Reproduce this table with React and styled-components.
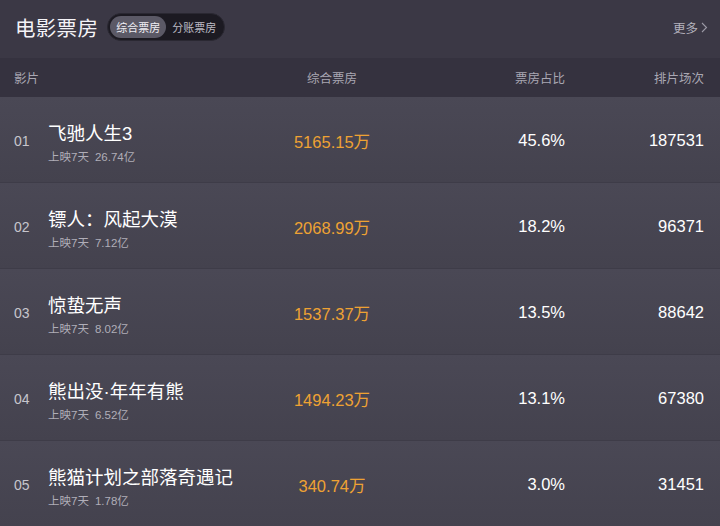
import React, { useState } from "react";
import styled, { createGlobalStyle } from "styled-components";

const GlobalStyle = createGlobalStyle`
  html, body {
    margin: 0;
    padding: 0;
    background: #3b3845;
    font-family: "Liberation Sans", "Noto Sans CJK SC", sans-serif;
    color: #ffffff;
  }
`;

const movies = [
  { rank: "01", name: "飞驰人生3", days: "上映7天", total: "26.74亿", box: "5165.15万", ratio: "45.6%", shows: "187531" },
  { rank: "02", name: "镖人：风起大漠", days: "上映7天", total: "7.12亿", box: "2068.99万", ratio: "18.2%", shows: "96371" },
  { rank: "03", name: "惊蛰无声", days: "上映7天", total: "8.02亿", box: "1537.37万", ratio: "13.5%", shows: "88642" },
  { rank: "04", name: "熊出没·年年有熊", days: "上映7天", total: "6.52亿", box: "1494.23万", ratio: "13.1%", shows: "67380" },
  { rank: "05", name: "熊猫计划之部落奇遇记", days: "上映7天", total: "1.78亿", box: "340.74万", ratio: "3.0%", shows: "31451" },
];

const Page = styled.div`
  width: 720px;
  height: 526px;
  overflow: hidden;
  background: #3b3845;
`;

const TopBar = styled.div`
  height: 58px;
  display: flex;
  align-items: center;
  padding: 0 12px 4px 15px;
  box-sizing: border-box;
`;

const Title = styled.h1`
  margin: 0;
  font-size: 20.5px;
  font-weight: 400;
  color: #f4f3f7;
  letter-spacing: 0.3px;
`;

const Switch = styled.div`
  display: flex;
  margin-left: 9px;
  padding: 2px;
  background: #1c1a22;
  border-radius: 14px;
  border: 1px solid #2a2832;
`;

const SwitchItem = styled.button`
  border: none;
  font-family: inherit;
  font-size: 11px;
  padding: 0 6px;
  height: 22px;
  border-radius: 11px;
  background: ${(p) => (p.$active ? "#5b5966" : "transparent")};
  color: ${(p) => (p.$active ? "#f0eff4" : "#bcbac4")};
  cursor: pointer;
`;

const More = styled.a`
  margin-left: auto;
  display: flex;
  align-items: center;
  gap: 3px;
  font-size: 12.5px;
  color: #b4b2bd;
  text-decoration: none;
`;

const Grid = styled.div`
  display: grid;
  grid-template-columns: 34px 1fr 140px 163px 139px;
  padding: 0 16px 0 14px;
  align-items: center;
`;

const HeadRow = styled(Grid)`
  height: 39px;
  background: #35323f;
  font-size: 12.5px;
  color: #a9a7b2;
`;

const Row = styled(Grid)`
  height: 86px;
  box-sizing: border-box;
  background: linear-gradient(#4a4855, #44424e);
  border-bottom: 1px solid #3e3c48;
`;

const Cell = styled.div`
  text-align: ${(p) => p.$align || "left"};
  grid-column: ${(p) => p.$span || "auto"};
`;

const Rank = styled.div`
  font-size: 14px;
  color: #c6c5cd;
  padding-top: 2px;
`;

const Film = styled.div`
  display: flex;
  flex-direction: column;
  gap: 3px;
  padding-top: 3px;
`;

const Name = styled.div`
  font-size: 18.5px;
  color: #ffffff;
`;

const Sub = styled.div`
  font-size: 11.5px;
  color: #b0aeb8;
  display: flex;
  gap: 6px;
`;

const Value = styled.div`
  font-size: 16.5px;
  text-align: ${(p) => p.$align};
  color: ${(p) => (p.$accent ? "#eea233" : "#ffffff")};
  padding-top: 2px;
`;

export default function App() {
  const [tab, setTab] = useState(0);
  return (
    <Page>
      <GlobalStyle />
      <TopBar>
        <Title>电影票房</Title>
        <Switch>
          {["综合票房", "分账票房"].map((t, i) => (
            <SwitchItem key={t} $active={tab === i} onClick={() => setTab(i)}>
              {t}
            </SwitchItem>
          ))}
        </Switch>
        <More href="#">
          更多
          <svg width="7" height="11" viewBox="0 0 7 11">
            <path d="M1 1l4.5 4.5L1 10" fill="none" stroke="#9c9aa6" strokeWidth="1.1" />
          </svg>
        </More>
      </TopBar>
      <HeadRow>
        <Cell $span="1 / 3">影片</Cell>
        <Cell $align="center">综合票房</Cell>
        <Cell $align="right">票房占比</Cell>
        <Cell $align="right">排片场次</Cell>
      </HeadRow>
      {movies.map((m) => (
        <Row key={m.rank}>
          <Rank>{m.rank}</Rank>
          <Film>
            <Name>{m.name}</Name>
            <Sub>
              <span>{m.days}</span>
              <span>{m.total}</span>
            </Sub>
          </Film>
          <Value $align="center" $accent>{m.box}</Value>
          <Value $align="right">{m.ratio}</Value>
          <Value $align="right">{m.shows}</Value>
        </Row>
      ))}
    </Page>
  );
}
